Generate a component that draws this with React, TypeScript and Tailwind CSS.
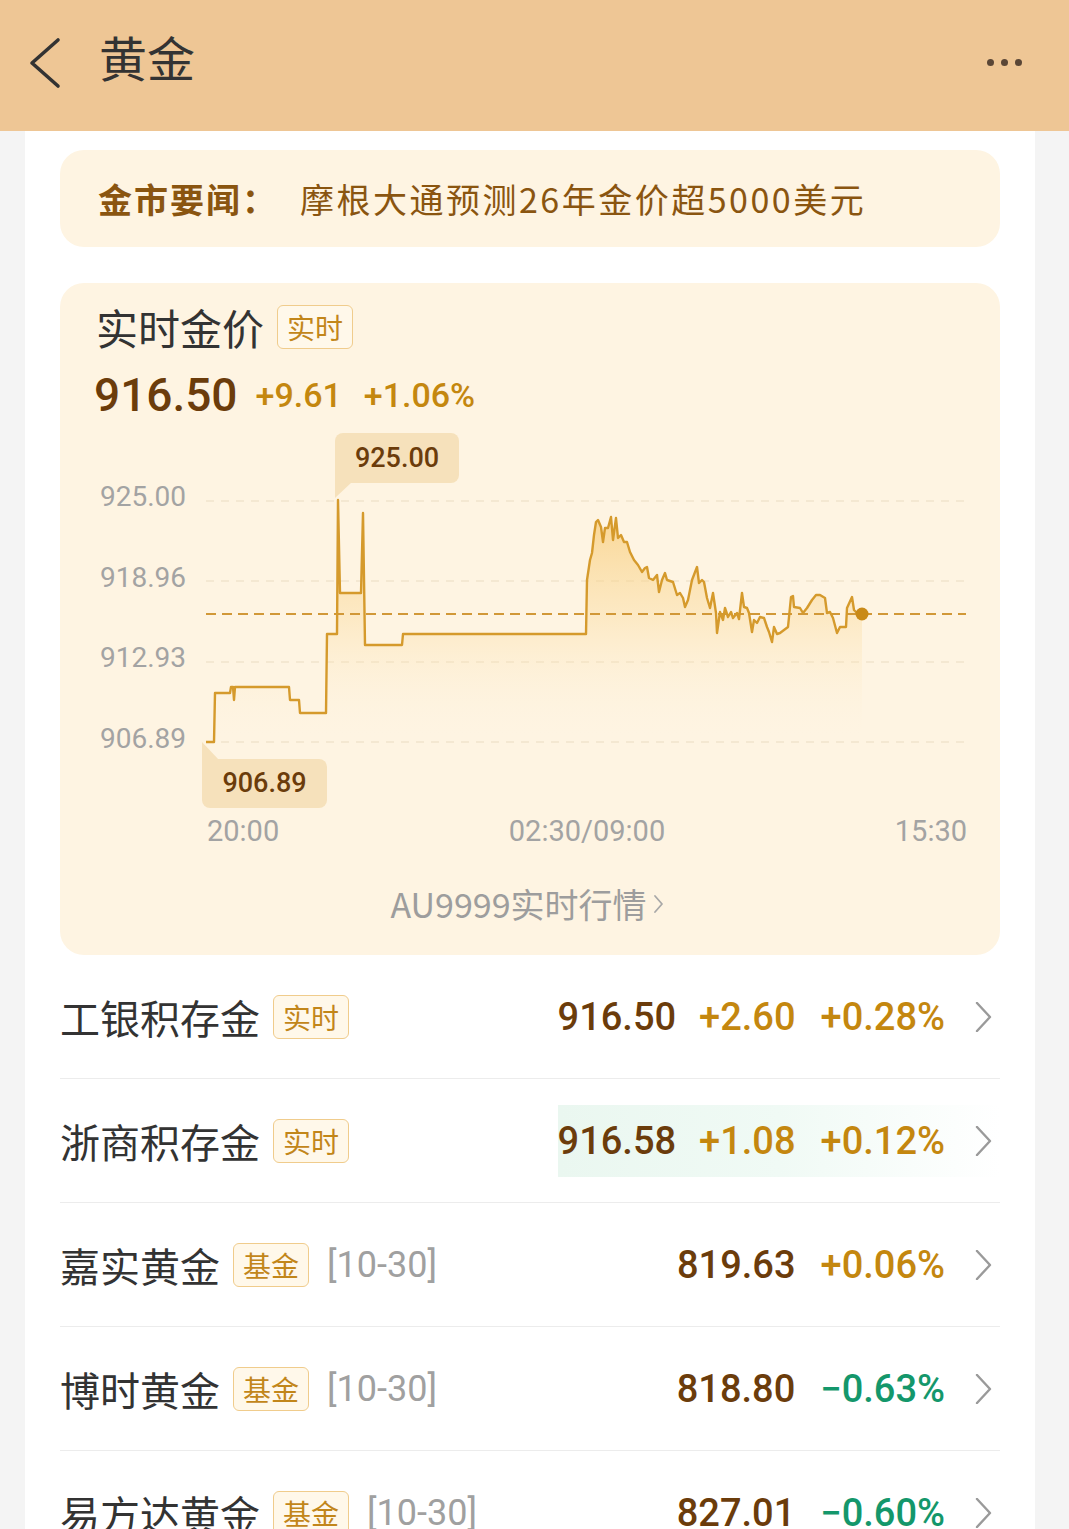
import React from "react";

const CJK = { fontFamily: '"Noto Sans CJK SC", "Noto Sans", sans-serif' };
const NUM = { fontFamily: 'Roboto, "Noto Sans CJK SC", sans-serif' };

const pts: [number, number][] = [
  [206,742],[214,742],[215,693],[230,693],[231,687],[233,687],[234,700],[235,687],[289,687],[290,700],[299,700],[300,713],[326,713],[327,634],[337,634],[338,500],[340,593],[361,593],[363,513],[365,645],[402,645],[403,634],[586,634],[587,580],[590,560],[592,553],[594,535],[596,522],[598,520],[601,527],[603,542],[605,528],[608,528],[611,517],[613,540],[616,518],[618,538],[621,535],[624,542],[627,542],[630,552],[634,560],[638,565],[642,572],[645,568],[647,567],[649,578],[653,580],[657,575],[659,592],[662,580],[665,573],[667,580],[673,582],[677,595],[680,593],[683,598],[685,607],[688,600],[692,580],[697,567],[699,583],[702,580],[704,582],[707,598],[710,608],[713,593],[716,613],[717,633],[720,612],[723,620],[725,608],[728,617],[731,612],[733,618],[737,613],[739,619],[742,593],[744,607],[747,608],[749,613],[752,632],[754,620],[757,623],[760,617],[764,618],[767,627],[769,632],[772,642],[774,627],[777,634],[780,633],[788,627],[791,597],[793,596],[794,607],[800,608],[803,613],[807,608],[812,600],[816,595],[820,595],[825,598],[827,613],[830,612],[833,618],[837,633],[840,627],[846,627],[847,608],[852,597],[854,610],[857,613],[862,614]
];

const linePath = pts.map((p, i) => `${i === 0 ? "M" : "L"}${p[0]} ${p[1]}`).join(" ");
const areaPath = `${linePath} L862 742 L206 742 Z`;

function Chevron({ className = "" }: { className?: string }) {
  return (
    <svg width="18" height="30" viewBox="0 0 18 30" className={className}>
      <path d="M2 1 L15 15 L2 29" fill="none" stroke="#9a9a9a" strokeWidth="2.4" strokeLinecap="round" strokeLinejoin="round" />
    </svg>
  );
}

function Badge({ text }: { text: string }) {
  return (
    <span
      className="ml-[13px] inline-flex h-[44px] w-[76px] items-center justify-center rounded-[6px] border border-[#f0cc8c] bg-[#fff8ea] text-[28px] leading-none text-[#c2861a]"
      style={CJK}
    >
      {text}
    </span>
  );
}

type Row = {
  name: string;
  badge: string;
  date?: string;
  price: string;
  change?: string;
  pct: string;
  down?: boolean;
  flash?: boolean;
};

const rows: Row[] = [
  { name: "工银积存金", badge: "实时", price: "916.50", change: "+2.60", pct: "+0.28%" },
  { name: "浙商积存金", badge: "实时", price: "916.58", change: "+1.08", pct: "+0.12%", flash: true },
  { name: "嘉实黄金", badge: "基金", date: "[10-30]", price: "819.63", pct: "+0.06%" },
  { name: "博时黄金", badge: "基金", date: "[10-30]", price: "818.80", pct: "−0.63%", down: true },
  { name: "易方达黄金", badge: "基金", date: "[10-30]", price: "827.01", pct: "−0.60%", down: true },
];

export default function App() {
  return (
    <div className="min-h-screen w-full bg-[#f4f4f4]" style={CJK}>
      {/* Header */}
      <header className="flex h-[131px] w-full items-center bg-[#eec695] pb-[6px] pl-[28px] pr-[47px]">
        <svg width="34" height="52" viewBox="0 0 34 52">
          <path d="M30 3 L4 26 L30 49" fill="none" stroke="#333333" strokeWidth="3.6" strokeLinecap="round" strokeLinejoin="round" />
        </svg>
        <h1 className="mb-[14px] ml-[37px] text-[48px] font-normal leading-none text-[#333333]" style={CJK}>
          黄金
        </h1>
        <div className="ml-auto flex items-center gap-[7px]">
          <span className="block h-[7px] w-[7px] rounded-full bg-[#5a4636]" />
          <span className="block h-[7px] w-[7px] rounded-full bg-[#5a4636]" />
          <span className="block h-[7px] w-[7px] rounded-full bg-[#5a4636]" />
        </div>
      </header>

      <main className="ml-[25px] mr-[34px] bg-white px-[35px] pt-[19px]">
        {/* News */}
        <div className="flex h-[97px] items-center rounded-[24px] bg-[#fef4e2] pl-[38px]">
          <span className="text-[34px] font-bold leading-none tracking-[2px] text-[#8a5510]" style={CJK}>
            金市要闻：
          </span>
          <span className="ml-[22px] text-[34px] leading-none tracking-[2.5px] text-[#8a5510]" style={CJK}>
            摩根大通预测26年金价超5000美元
          </span>
        </div>

        {/* Price card */}
        <section className="mt-[36px] flex h-[672px] flex-col rounded-[24px] bg-[#fef4e2] pt-[22px]">
          <div className="flex h-[44px] items-center pl-[36px]">
            <span className="text-[42px] leading-none text-[#333333]" style={CJK}>
              实时金价
            </span>
            <Badge text="实时" />
          </div>
          <div className="mt-[23px] flex h-[46px] items-center pl-[34px]" style={NUM}>
            <span className="text-[46px] font-medium leading-none text-[#6b3c0b]">916.50</span>
            <span className="ml-[18px] text-[34px] font-medium leading-none text-[#c4870f]">+9.61</span>
            <span className="ml-[22px] text-[34px] font-medium leading-none text-[#c4870f]">+1.06%</span>
          </div>

          {/* Chart canvas */}
          <div className="relative h-[452px] w-full">
            <svg className="absolute inset-0 h-full w-full" viewBox="0 0 940 452">
              <defs>
                <linearGradient id="area" x1="0" y1="500" x2="0" y2="742" gradientUnits="userSpaceOnUse">
                  <stop offset="0" stopColor="#f7c870" stopOpacity="0.75" />
                  <stop offset="0.5" stopColor="#fad792" stopOpacity="0.35" />
                  <stop offset="1" stopColor="#fef4e2" stopOpacity="0" />
                </linearGradient>
              </defs>
              <g transform="translate(-60 -418)">
                {[501, 581, 662, 742].map((y) => (
                  <line key={y} x1="206" x2="966" y1={y} y2={y} stroke="#f1e4cd" strokeWidth="1.5" strokeDasharray="8 7" />
                ))}
                <path d={areaPath} fill="url(#area)" />
                <line x1="206" x2="966" y1="614" y2="614" stroke="#d19838" strokeWidth="1.8" strokeDasharray="10 6" />
                <path d={linePath} fill="none" stroke="#d59a2c" strokeWidth="2.4" strokeLinejoin="round" />
                <circle cx="862" cy="614" r="6.5" fill="#c98a18" />
                <path d="M335 482 L352 482 L335 498 Z" fill="#f6e1bb" />
                <path d="M202 742 L202 760 L219 760 Z" fill="#f6e1bb" />
              </g>
            </svg>

            {/* Y labels */}
            {[
              { t: "925.00", top: "top-[63px]" },
              { t: "918.96", top: "top-[144px]" },
              { t: "912.93", top: "top-[224px]" },
              { t: "906.89", top: "top-[305px]" },
            ].map((l) => (
              <span
                key={l.t}
                className={`absolute left-[29px] ${l.top} w-[97px] text-right text-[28px] leading-[32px] text-[#a3a3a3]`}
                style={NUM}
              >
                {l.t}
              </span>
            ))}

            {/* Tooltips */}
            <div
              className="absolute left-[275px] top-[15px] flex h-[50px] w-[124px] items-center justify-center rounded-[8px] rounded-bl-none bg-[#f6e1bb] text-[27px] font-medium leading-none text-[#6b3c0b]"
              style={NUM}
            >
              925.00
            </div>
            <div
              className="absolute left-[142px] top-[341px] flex h-[49px] w-[125px] items-center justify-center rounded-[8px] rounded-tl-none bg-[#f6e1bb] text-[27px] font-medium leading-none text-[#6b3c0b]"
              style={NUM}
            >
              906.89
            </div>

            {/* X labels */}
            <span className="absolute left-[147px] top-[397px] text-[29px] leading-[32px] text-[#a3a3a3]" style={NUM}>
              20:00
            </span>
            <span className="absolute left-[527px] top-[397px] -translate-x-1/2 text-[29px] leading-[32px] text-[#a3a3a3]" style={NUM}>
              02:30/09:00
            </span>
            <span className="absolute right-[33px] top-[397px] text-[29px] leading-[32px] text-[#a3a3a3]" style={NUM}>
              15:30
            </span>
          </div>

          <div className="flex h-[68px] items-center justify-center pr-[4px]">
            <span className="text-[34px] leading-none text-[#9d9d9d]" style={CJK}>
              AU9999实时行情
            </span>
            <svg width="14" height="22" viewBox="0 0 14 22" className="ml-[5px]">
              <path d="M3 3 L10 11 L3 19" fill="none" stroke="#a8a8a8" strokeWidth="1.8" strokeLinecap="round" strokeLinejoin="round" />
            </svg>
          </div>
        </section>

        {/* List */}
        <div>
          {rows.map((r) => (
            <div key={r.name} className="flex h-[124px] items-center border-b border-[#ececec]">
              <span className="text-[40px] leading-none text-[#333333]" style={CJK}>
                {r.name}
              </span>
              <Badge text={r.badge} />
              {r.date && (
                <span className="ml-[18px] text-[36px] leading-none text-[#a0a0a0]" style={NUM}>
                  {r.date}
                </span>
              )}
              <div
                className={`ml-auto flex h-[72px] items-center pr-[7px] ${
                  r.flash ? "bg-linear-to-r from-[#eaf7f0] via-[#f0faf5] to-white" : ""
                }`}
                style={NUM}
              >
                <span className="text-[38px] font-medium leading-none text-[#6b3c0b]">{r.price}</span>
                {r.change && (
                  <span className="ml-[23px] text-[38px] font-medium leading-none text-[#c4870f]">{r.change}</span>
                )}
                <span
                  className={`ml-[25px] text-[38px] font-medium leading-none ${
                    r.down ? "text-[#14976b]" : "text-[#c4870f]"
                  }`}
                >
                  {r.pct}
                </span>
                <Chevron className="ml-[30px]" />
              </div>
            </div>
          ))}
        </div>
      </main>
    </div>
  );
}
